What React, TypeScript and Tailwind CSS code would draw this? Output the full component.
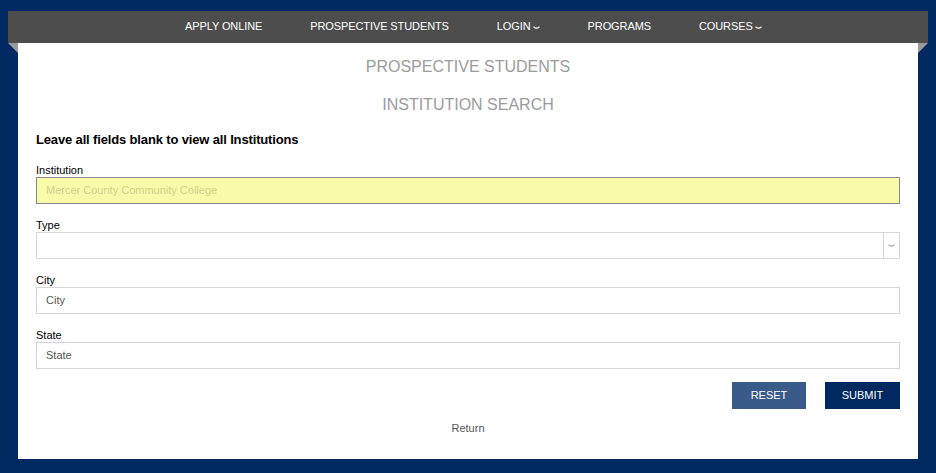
import React from "react";

function Chev({ className = "" }: { className?: string }) {
  return (
    <svg width="7" height="4" viewBox="0 0 7 4" className={className}>
      <path d="M0.5 0.8 Q3.5 3.6 6.5 0.8" fill="none" stroke="currentColor" strokeWidth="1.2" />
    </svg>
  );
}

function Field({ label, placeholder, highlight }: { label: string; placeholder?: string; highlight?: boolean }) {
  return (
    <div className="flex flex-col">
      <div className="text-[11px] leading-[13px] text-black">{label}</div>
      <div
        className={
          highlight
            ? "h-[27px] border border-[#8a8a8a] bg-[#f8fba8] flex items-center pl-[9px] text-[11px] text-[#cfd28a]"
            : "h-[27px] border border-[#d6d6d6] bg-white flex items-center pl-[9px] text-[11px] text-[#555]"
        }
      >
        {placeholder}
      </div>
    </div>
  );
}

export default function App() {
  return (
    <div
      className="w-[936px] h-[473px] bg-[#002961] pt-[11px] overflow-hidden"
      style={{ fontFamily: '"Liberation Sans", Arial, sans-serif' }}
    >
      <nav className="mx-[8px] h-[32px] bg-[#4d4d4d] flex items-center pl-[177px] pb-[1px] gap-[48px] text-white text-[11px] tracking-[-0.1px]">
        <span>APPLY ONLINE</span>
        <span>PROSPECTIVE STUDENTS</span>
        <span className="flex items-center gap-[2px]">
          LOGIN <Chev className="mt-[2px]" />
        </span>
        <span>PROGRAMS</span>
        <span className="flex items-center gap-[2px]">
          COURSES <Chev className="mt-[2px]" />
        </span>
      </nav>
      <div className="flex mx-[8px]">
        <div className="w-[10px]">
          <svg width="10" height="10" viewBox="0 0 10 10" className="block">
            <polygon points="0,0 10,0 10,10" fill="#9a9a9a" />
          </svg>
        </div>
        <main className="w-[900px] h-[416px] bg-white flex flex-col">
          <div className="pt-[15px] text-center text-[16px] leading-[18px] text-[#9b9b9b]">PROSPECTIVE STUDENTS</div>
          <div className="pt-[20px] text-center text-[16px] leading-[18px] text-[#9b9b9b]">INSTITUTION SEARCH</div>
          <div className="px-[18px] pt-[18px]">
            <div className="text-[13px] leading-[15px] font-bold text-black tracking-[-0.15px]">Leave all fields blank to view all Institutions</div>
            <div className="pt-[17px] flex flex-col gap-[15px]">
              <Field label="Institution" placeholder="Mercer County Community College" highlight />
              <div className="flex flex-col">
                <div className="text-[11px] leading-[13px] text-black">Type</div>
                <div className="h-[27px] border border-[#d6d6d6] bg-white flex justify-end">
                  <div className="w-[16px] border-l border-[#d6d6d6] flex items-center justify-center text-[#aaa]">
                    <Chev />
                  </div>
                </div>
              </div>
              <Field label="City" placeholder="City" />
              <Field label="State" placeholder="State" />
            </div>
            <div className="pt-[13px] flex justify-end gap-[19px]">
              <button className="w-[74px] h-[27px] bg-[#3a5a8a] text-white text-[11px]">RESET</button>
              <button className="w-[75px] h-[27px] bg-[#002961] text-white text-[11px]">SUBMIT</button>
            </div>
            <div className="pt-[13px] text-center text-[11px] leading-[13px] text-[#555]">Return</div>
          </div>
        </main>
        <div className="w-[10px]">
          <svg width="10" height="10" viewBox="0 0 10 10" className="block">
            <polygon points="0,0 10,0 0,10" fill="#9a9a9a" />
          </svg>
        </div>
      </div>
    </div>
  );
}
